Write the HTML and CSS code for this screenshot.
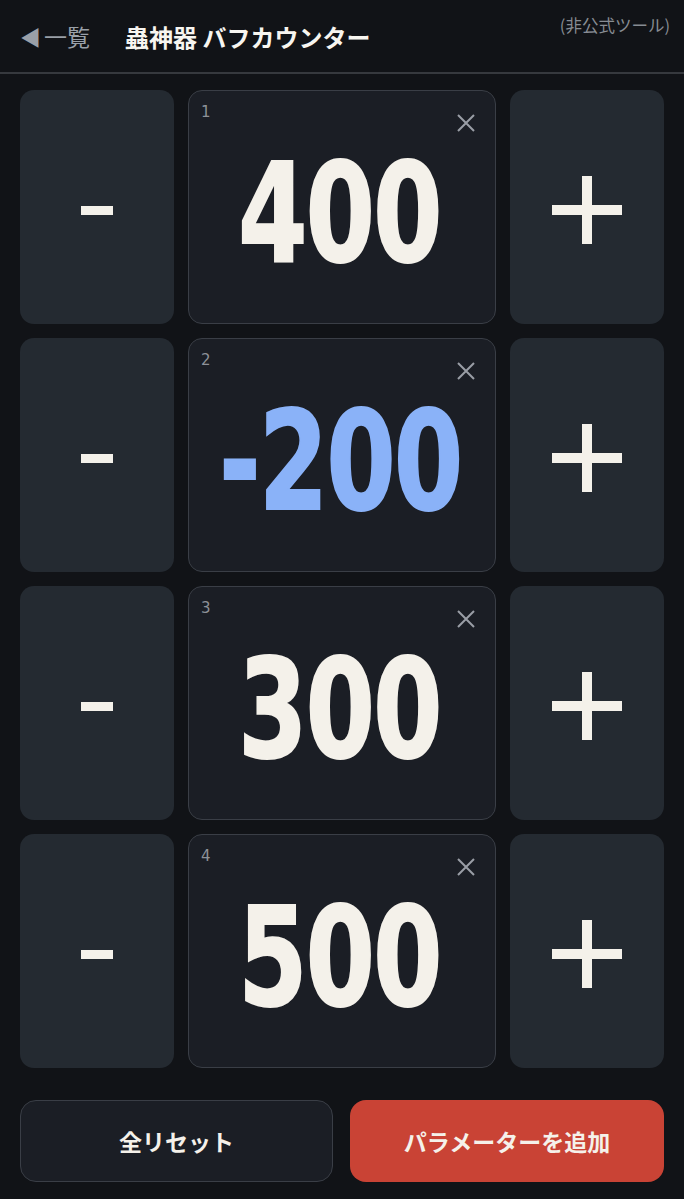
FILE: index.html
```html
<!DOCTYPE html>
<html lang="ja">
<head>
<meta charset="utf-8">
<title>蟲神器 バフカウンター</title>
<link rel="stylesheet" href="styles.css">
</head>
<body>
<div class="app">
  <header class="header">
    <a class="back"><span class="back-arrow">◀</span>一覧</a>
    <h1 class="title">蟲神器 バフカウンター</h1>
    <span class="note">(非公式ツール)</span>
  </header>
  <main class="grid">
    <button class="step"><svg width="32" height="9" viewBox="0 0 32 9"><rect x="0" y="0" width="32" height="9" fill="#f4f1ea"/></svg></button>
    <div class="card"><span class="idx">1</span><button class="close"><svg width="20" height="20" viewBox="0 0 20 20"><path d="M2 2 L18 18 M18 2 L2 18" stroke="#9a9ea6" stroke-width="2" fill="none"/></svg></button><span class="value">400</span></div>
    <button class="step"><svg width="70" height="68" viewBox="0 0 70 68"><rect x="0" y="29" width="70" height="10" fill="#f4f1ea"/><rect x="30" y="0" width="10" height="68" fill="#f4f1ea"/></svg></button>

    <button class="step"><svg width="32" height="9" viewBox="0 0 32 9"><rect x="0" y="0" width="32" height="9" fill="#f4f1ea"/></svg></button>
    <div class="card"><span class="idx">2</span><button class="close"><svg width="20" height="20" viewBox="0 0 20 20"><path d="M2 2 L18 18 M18 2 L2 18" stroke="#9a9ea6" stroke-width="2" fill="none"/></svg></button><span class="value neg">-200</span></div>
    <button class="step"><svg width="70" height="68" viewBox="0 0 70 68"><rect x="0" y="29" width="70" height="10" fill="#f4f1ea"/><rect x="30" y="0" width="10" height="68" fill="#f4f1ea"/></svg></button>

    <button class="step"><svg width="32" height="9" viewBox="0 0 32 9"><rect x="0" y="0" width="32" height="9" fill="#f4f1ea"/></svg></button>
    <div class="card"><span class="idx">3</span><button class="close"><svg width="20" height="20" viewBox="0 0 20 20"><path d="M2 2 L18 18 M18 2 L2 18" stroke="#9a9ea6" stroke-width="2" fill="none"/></svg></button><span class="value">300</span></div>
    <button class="step"><svg width="70" height="68" viewBox="0 0 70 68"><rect x="0" y="29" width="70" height="10" fill="#f4f1ea"/><rect x="30" y="0" width="10" height="68" fill="#f4f1ea"/></svg></button>

    <button class="step"><svg width="32" height="9" viewBox="0 0 32 9"><rect x="0" y="0" width="32" height="9" fill="#f4f1ea"/></svg></button>
    <div class="card"><span class="idx">4</span><button class="close"><svg width="20" height="20" viewBox="0 0 20 20"><path d="M2 2 L18 18 M18 2 L2 18" stroke="#9a9ea6" stroke-width="2" fill="none"/></svg></button><span class="value">500</span></div>
    <button class="step"><svg width="70" height="68" viewBox="0 0 70 68"><rect x="0" y="29" width="70" height="10" fill="#f4f1ea"/><rect x="30" y="0" width="10" height="68" fill="#f4f1ea"/></svg></button>
  </main>
  <footer class="actions">
    <button class="btn reset">全リセット</button>
    <button class="btn add">パラメーターを追加</button>
  </footer>
</div>
</body>
</html>
```
FILE: styles.css
```css
* { box-sizing: border-box; }
html, body { margin: 0; padding: 0; }
body {
  background: #111317;
  font-family: "Noto Sans CJK JP", "Noto Sans", sans-serif;
  color: #f4f1ea;
  width: 684px;
  height: 1199px;
  overflow: hidden;
}
.app { display: flex; flex-direction: column; }
.header {
  height: 74px;
  border-bottom: 2px solid #36393e;
  display: flex;
  align-items: center;
  padding: 0 14px 0 20px;
  position: relative;
}
.back {
  color: #9aa0a8;
  font-size: 23px;
  display: flex;
  align-items: center;
  padding-top: 0;
}
.back-arrow { font-size: 21px; margin-right: 3px; }
.title {
  margin: 0 0 0 35px;
  font-size: 24px;
  font-weight: 700;
  color: #f7f5f0;
  padding-top: 0;
}
.note {
  position: absolute;
  right: 14px;
  top: 13px;
  font-size: 16.5px;
  color: #878c93;
}
.grid {
  display: grid;
  grid-template-columns: 154px 308px 154px;
  grid-auto-rows: 234px;
  gap: 14px;
  padding: 16px 20px 0;
}
.step {
  border: none;
  background: #242a31;
  border-radius: 14px;
  display: flex;
  align-items: center;
  justify-content: center;
  padding: 6px 0 0;
  cursor: pointer;
}
.card {
  background: #1b1e25;
  border: 1.5px solid #3a3e46;
  border-radius: 14px;
  position: relative;
  display: flex;
  align-items: center;
  justify-content: center;
}
.idx {
  position: absolute;
  left: 12px;
  top: 12px;
  font-size: 15px;
  color: #8d9198;
  font-family: "DejaVu Sans", sans-serif;
}
.close {
  position: absolute;
  right: 18px;
  top: 21px;
  width: 22px;
  height: 22px;
  padding: 0;
  border: none;
  background: none;
  display: flex;
  align-items: center;
  justify-content: center;
}
.value {
  font-family: "DejaVu Sans Condensed", "DejaVu Sans", sans-serif;
  font-weight: 700;
  font-size: 138px;
  line-height: 1;
  color: #f4f1ea;
  margin-top: 14px;
  letter-spacing: -2px;
  transform: scaleX(0.8);
  margin-left: -4px;
  -webkit-text-stroke: 2px currentColor;
}
.value.neg { color: #8ab2f8; }
.actions {
  display: flex;
  gap: 17px;
  padding: 32px 20px 0;
}
.btn {
  height: 82px;
  border-radius: 16px;
  font-family: "Noto Sans CJK JP", sans-serif;
  font-weight: 700;
  font-size: 23px;
  color: #f5f1ea;
}
.reset {
  width: 313px;
  background: #1b1e25;
  border: 1.5px solid #3a3e46;
}
.add {
  width: 314px;
  background: #c94335;
  border: none;
}
```
